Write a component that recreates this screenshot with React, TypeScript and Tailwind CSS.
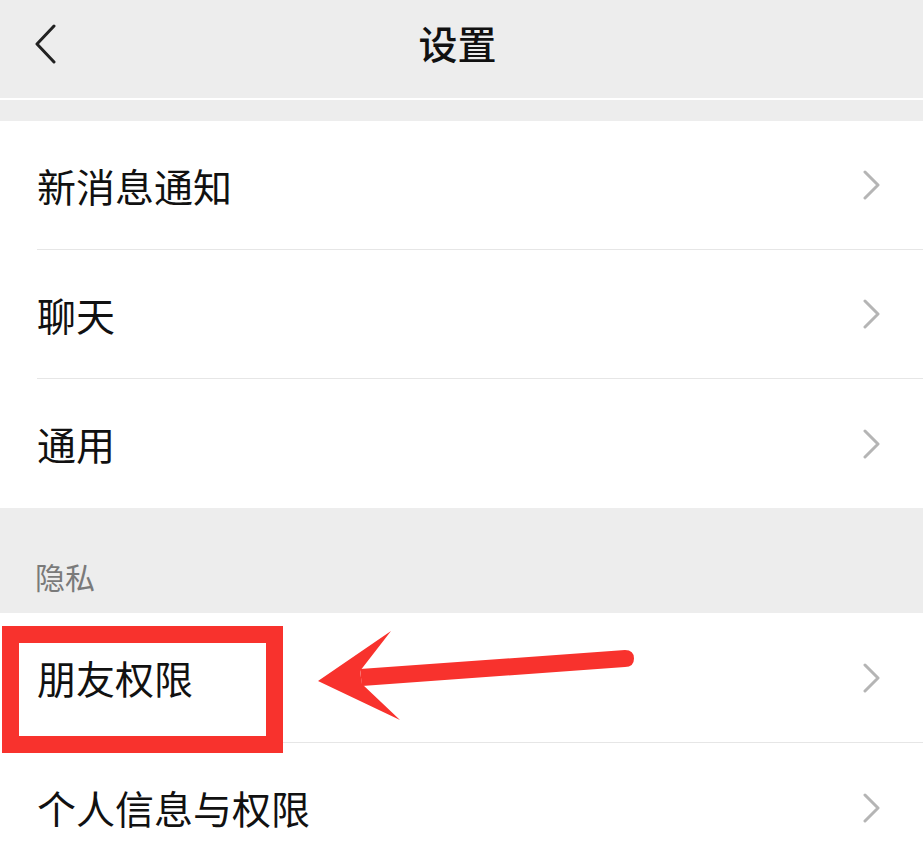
import React from "react";

const items1 = ["新消息通知", "聊天", "通用"];

function Chevron() {
  return (
    <svg width="18" height="30" viewBox="0 0 18 30" fill="none">
      <path d="M2 2 L15 15 L2 28" stroke="#b5b5b5" strokeWidth="3" strokeLinecap="round" strokeLinejoin="round" />
    </svg>
  );
}

function Row({ label, last }: { label: string; last?: boolean }) {
  return (
    <div className="bg-white pl-[37px]">
      <div
        className={`h-[129px] flex items-center justify-between pr-[42px] ${
          last ? "" : "border-b border-[#e6e6e6]"
        }`}
      >
        <span className="text-[39px] text-[#111]">{label}</span>
        <Chevron />
      </div>
    </div>
  );
}

export default function App() {
  return (
    <div
      className="relative w-[923px] h-[868px] overflow-hidden bg-[#ededed]"
      style={{ fontFamily: '"Noto Sans CJK SC", "Noto Sans", sans-serif' }}
    >
      <div className="h-[98px] flex items-center justify-center relative">
        <svg className="absolute left-[32px] top-[24px]" width="26" height="40" viewBox="0 0 26 40" fill="none">
          <path d="M22 2 L5 20 L22 38" stroke="#222" strokeWidth="3" strokeLinecap="round" strokeLinejoin="round" />
        </svg>
        <span className="text-[39px] font-medium text-[#111] -mt-[14px] mr-[8px]">设置</span>
      </div>
      <div className="h-[2px] bg-white" />
      <div className="h-[21px]" />

      {items1.map((t, i) => (
        <Row key={t} label={t} last={i === items1.length - 1} />
      ))}

      <div className="h-[105px] flex items-end pl-[35px] pb-[14px]">
        <span className="text-[30px] text-[#7a7a7a]">隐私</span>
      </div>

      <div className="bg-white pl-[37px]">
        <div className="h-[130px] flex items-center justify-between pr-[42px] border-b border-[#e6e6e6]">
          <span className="text-[39px] text-[#111]">朋友权限</span>
          <Chevron />
        </div>
      </div>
      <Row label="个人信息与权限" last />

      <div className="absolute left-[2px] top-[626px] w-[281px] h-[127px] border-[17px] border-[#f8322d]" />
      <svg className="absolute left-0 top-0" width="923" height="868" viewBox="0 0 923 868">
        <path d="M360 669 L625 650 Q634 650 634 658.5 Q634 667 625 667 L362 686 Z" fill="#f8322d" />
        <path d="M318 681 L391 631 L360 671 L362 684 L400 720 Z" fill="#f8322d" />
      </svg>
    </div>
  );
}
